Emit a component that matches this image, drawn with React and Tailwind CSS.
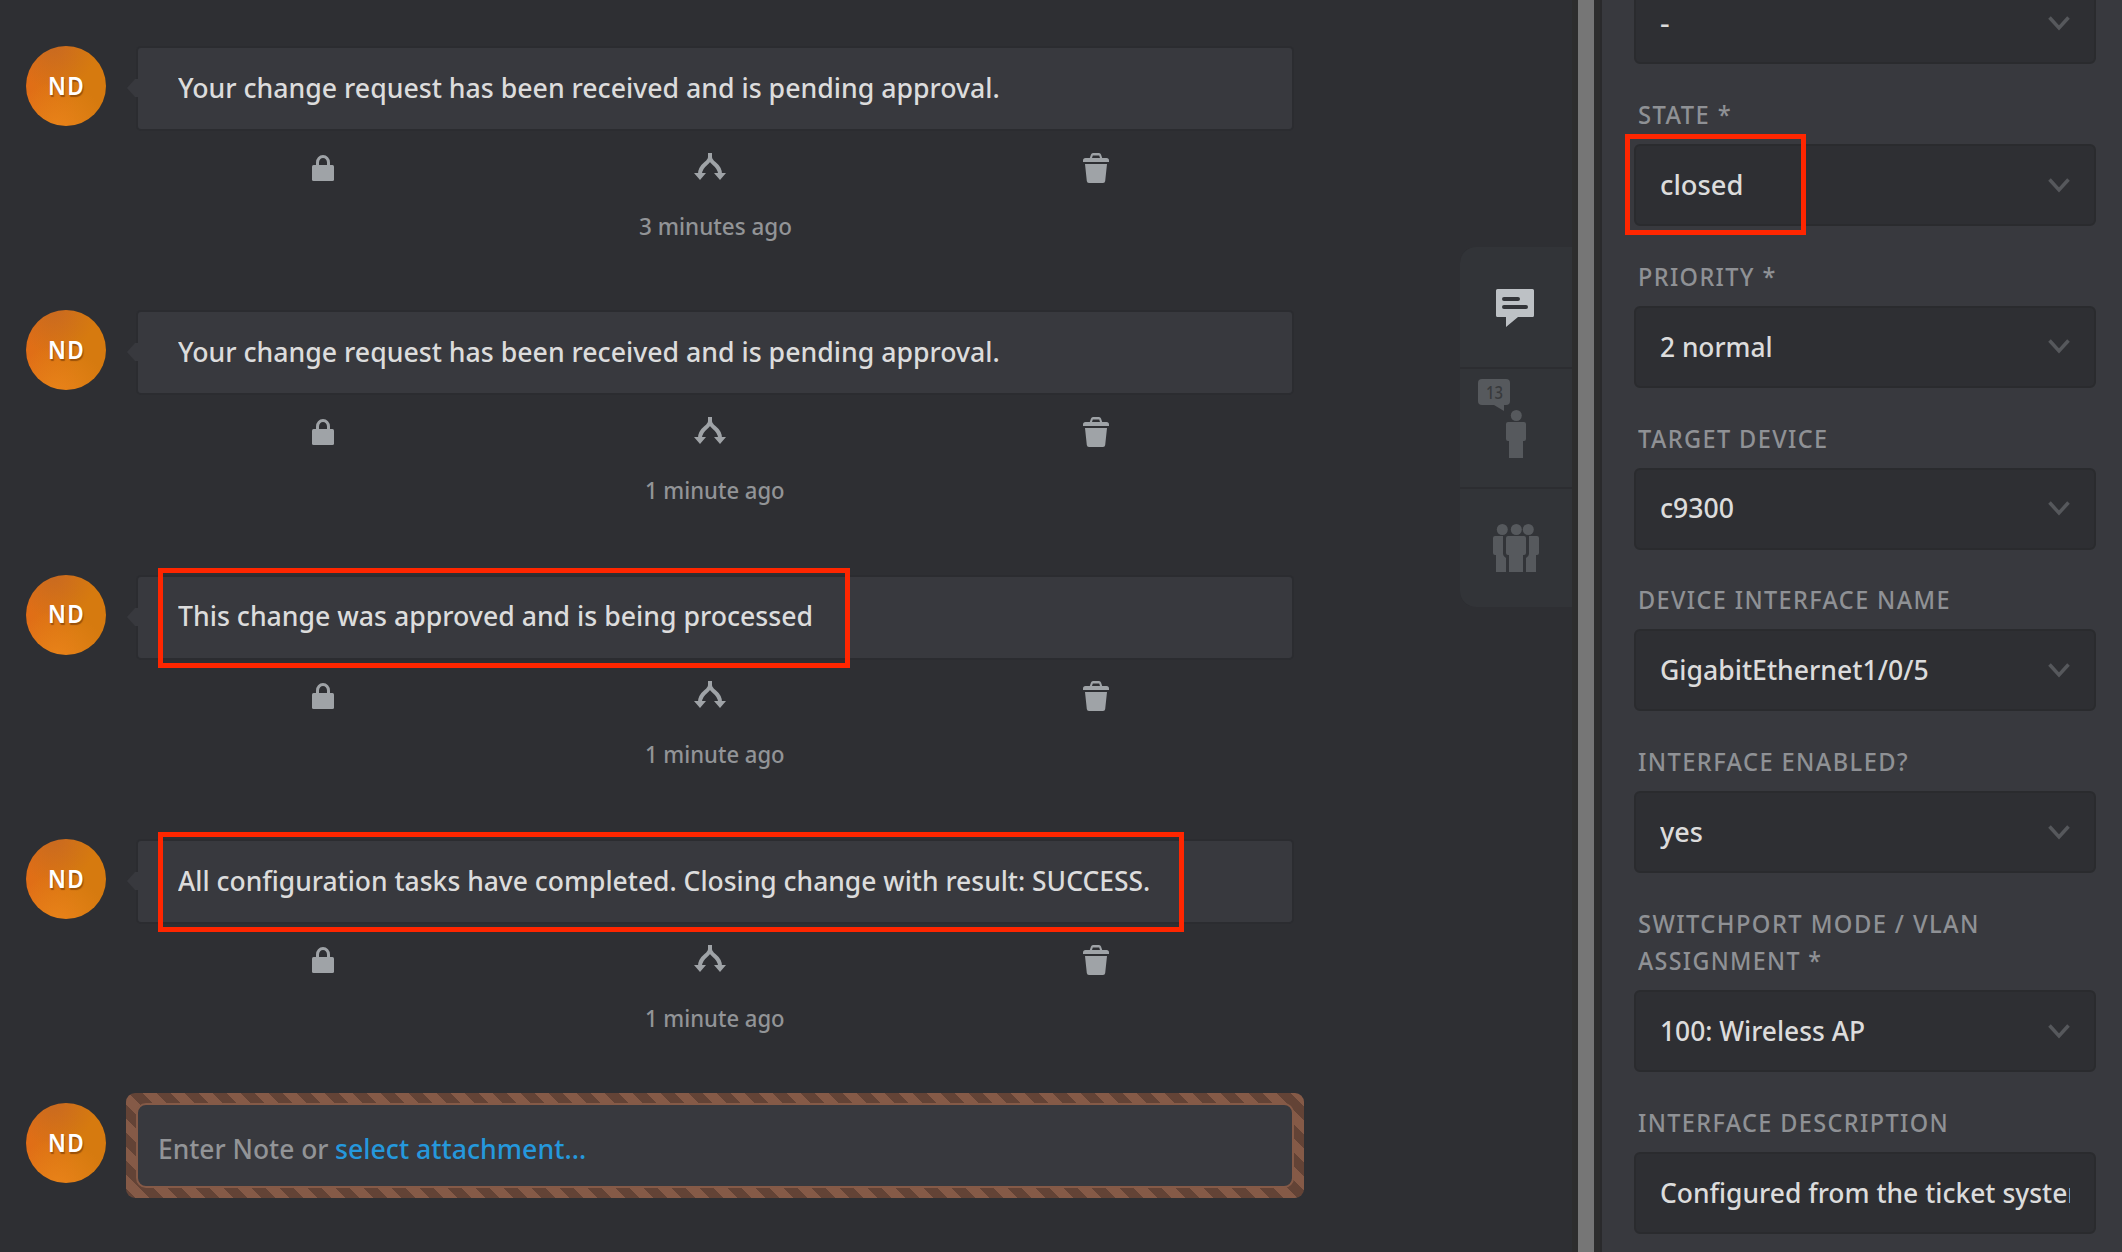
import React, { useLayoutEffect, useRef, useState } from "react";

/* Single-line text squeezed or stretched horizontally to an exact width. */
function FitText({ width, className = "", children }) {
  const ref = useRef(null);
  const [scale, setScale] = useState(1);
  useLayoutEffect(() => {
    if (ref.current) setScale(width / ref.current.offsetWidth);
  }, [width]);
  return (
    <span className="inline-block whitespace-nowrap" style={{ width }}>
      <span
        ref={ref}
        className={`inline-block origin-left whitespace-nowrap ${className}`}
        style={{ transform: `scaleX(${scale})` }}
      >
        {children}
      </span>
    </span>
  );
}

function Avatar() {
  return (
    <div className="flex size-20 shrink-0 items-center justify-center rounded-full bg-[radial-gradient(circle_at_35%_0%,#c96a20_0%,transparent_45%),radial-gradient(circle_at_40%_105%,#e98319_0%,transparent_50%),linear-gradient(90deg,#e16d17,#d67a0f_65%)] pb-px text-white [text-shadow:1px_2px_1px_rgba(90,40,0,0.5)]">
      <FitText width={37} className="text-[25px] font-semibold tracking-[1.5px]">ND</FitText>
    </div>
  );
}

function LockIcon() {
  return (
    <svg width="22" height="26" viewBox="0 0 22 26" fill="#9fa3a7">
      <rect x="0" y="10" width="22" height="16" rx="1.5" />
      <path d="M5.500 11V7.500a5.500 6 0 0 1 11 0V11" fill="none" stroke="#9fa3a7" strokeWidth="3" />
    </svg>
  );
}

function ForkIcon() {
  return (
    <svg width="32" height="27" viewBox="0 0 32 27" fill="#9fa3a7">
      <path d="M0 20h12l-6 7zM20 20h12l-6 7z" />
      <path d="M16 0v4C16 11 6 10.500 6 21M16 4C16 11 26 10.500 26 21" fill="none" stroke="#9fa3a7" strokeWidth="4" />
    </svg>
  );
}

function TrashIcon() {
  return (
    <svg width="26" height="30" viewBox="0 0 26 30" fill="#9fa3a7">
      <path d="M0 9V7.500Q0 5 2.500 5H6.800L8 1.500Q8.500 0 10 0h6q1.500 0 2 1.500L19.200 5h4.300Q26 5 26 7.500V9zM9 5h8l-.8-2.500H9.800z" fillRule="evenodd" />
      <path d="M2 11h22l-1.800 17q-.2 2-2.200 2H6q-2 0-2.200-2z" />
    </svg>
  );
}

const RED_BOX = "pointer-events-none absolute border-[5px] border-[#ff2600]";

function Note({ text, width, ago, agoWidth, mark }) {
  return (
    <article className="flex h-[264.25px] items-start pl-[26px]">
      <Avatar />
      <div className="relative mt-[2px] ml-8 w-[1154px] shrink-0">
        <svg className="absolute top-[31px] -left-[11px]" width="11" height="18" viewBox="0 0 11 18">
          <path d="M11 0H8L0 9l8 9h3z" fill="#38393e" />
        </svg>
        <div className="flex h-[81px] items-center rounded-[3px] bg-[#38393e] pb-px pl-[40px] text-[27px] font-medium text-[#dcdcdc] shadow-[0_0_0_2px_#2b2c30]">
          <FitText width={width} className="leading-9">{text}</FitText>
        </div>
        {mark && <div className={`${RED_BOX} ${mark}`} />}
        <div className="-ml-2 grid h-[53.5px] grid-cols-[386.5px_386.5px_386.5px] items-end justify-items-center">
          <div className="pb-[2px]"><LockIcon /></div>
          <div className="pb-[3px]"><ForkIcon /></div>
          <TrashIcon />
        </div>
        <div className="mt-[27px] flex justify-center text-[23.500px] leading-8 font-medium text-[#929497]">
          <FitText width={agoWidth}>{ago}</FitText>
        </div>
      </div>
    </article>
  );
}

const NOTES = [
  { text: "Your change request has been received and is pending approval.", width: 822, ago: "3 minutes ago", agoWidth: 153 },
  { text: "Your change request has been received and is pending approval.", width: 822, ago: "1 minute ago", agoWidth: 140 },
  {
    text: "This change was approved and is being processed",
    width: 635,
    ago: "1 minute ago",
    agoWidth: 140,
    mark: "left-[19.5px] -top-[9px] h-[100px] w-[692px]",
  },
  {
    text: "All configuration tasks have completed. Closing change with result: SUCCESS.",
    width: 972,
    ago: "1 minute ago",
    agoWidth: 140,
    mark: "left-[19.5px] -top-[9px] h-[100px] w-[1026px]",
  },
];

function NoteEditor() {
  return (
    <div className="flex items-start pl-[26px]">
      <Avatar />
      <div className="-mt-[10px] ml-5 h-[105px] w-[1178px] shrink-0 rounded-[9px] bg-[linear-gradient(45deg,#634336_25%,#855a47_25%,#855a47_50%,#634336_50%,#634336_75%,#855a47_75%)] bg-[length:28px_28px] bg-[position:3px_0px] p-[10px]">
        <div className="flex h-[85px] items-center rounded-[10px] border-2 border-[#855a47] bg-[#38393e] pt-[8px] pl-[20px] text-[27px] font-medium text-[#929497]">
          <FitText width={170}>Enter Note or</FitText>
          <span className="ml-[7px] text-[#2598dc]">
            <FitText width={251}>select attachment...</FitText>
          </span>
        </div>
      </div>
    </div>
  );
}

function ChatIcon() {
  return (
    <svg width="38" height="38" viewBox="0 0 38 38">
      <path d="M1.500 0h35Q38 0 38 1.500v25q0 1.500-1.500 1.500H22L10 38V28H1.500Q0 28 0 26.500v-25Q0 0 1.500 0z" fill="#bdc1c5" />
      <path d="M8 10h8M8 10h14M8 18h22" stroke="#323438" strokeWidth="4" strokeLinecap="round" />
    </svg>
  );
}

function PersonIcon() {
  return (
    <svg width="20" height="48" viewBox="0 0 20 48" fill="#56595d">
      <circle cx="10.300" cy="5.500" r="5.500" />
      <path d="M2 12h16q2 0 2 2v15q0 2-2 2h-1v17H3V31H2q-2 0-2-2V14q0-2 2-2z" />
    </svg>
  );
}

function GroupIcon() {
  return (
    <svg width="46" height="48" viewBox="0 0 46 48" fill="#56595d">
      <circle cx="9.300" cy="5.500" r="5.500" />
      <circle cx="23.300" cy="5.500" r="5.500" />
      <circle cx="35.300" cy="5.500" r="5.500" />
      <path d="M15 12h16q2 0 2 2v15q0 2-2 2h-1v17H16V31h-1q-2 0-2-2V14q0-2 2-2z" />
      <path d="M2 12h8v18q0 2 3 4v14H3V31H2q-2 0-2-2V14q0-2 2-2z" />
      <path d="M36 12h8q2 0 2 2v15q0 2-2 2h-1v17H33V34q3-2 3-4z" />
    </svg>
  );
}

function TabRail() {
  return (
    <nav className="mt-[247px] ml-auto flex h-[360px] w-28 flex-col gap-[2px] overflow-hidden rounded-l-2xl bg-[#2c2d31]">
      <div className="h-[120px] bg-[#323438] pt-[42px] pl-9"><ChatIcon /></div>
      <div className="relative h-[118px] bg-[#323438] pt-[41px] pl-[46px]">
        <PersonIcon />
        <div className="absolute top-[10px] left-[18px] flex h-[26px] w-8 items-center justify-center rounded bg-[#56595d] text-[17.500px] font-medium text-[#38393c]">
          <FitText width={17}>13</FitText>
          <svg className="absolute top-[26px] left-4" width="10" height="6" viewBox="0 0 10 6">
            <path d="M0 0h10v6z" fill="#56595d" />
          </svg>
        </div>
      </div>
      <div className="h-[118px] bg-[#323438] pt-[35px] pl-[33px]"><GroupIcon /></div>
    </nav>
  );
}

function Field({ label = [], value, width, input, mark }) {
  return (
    <div className="flex flex-col">
      <div className="flex flex-col pt-[31.800px] pb-[11px] pl-[4px]">
        {label.map(([line, w]) => (
          <div key={line} className="flex h-[37px] items-center text-[25.500px] leading-[37px] font-medium text-[#8f9195]">
            <FitText width={w} className="tracking-[1.5px]">{line}</FitText>
          </div>
        ))}
      </div>
      <div className="relative flex h-[82px] items-center justify-between rounded-md border-2 border-[#2a2b2e] bg-[#2e2f33] pr-6 pl-6 text-[27px] font-medium text-[#dcdcdc]">
        <div className="min-w-0 flex-1 overflow-hidden">
          <FitText width={width}>{value}</FitText>
        </div>
        {!input && (
          <svg className="shrink-0" width="22" height="15" viewBox="0 0 22 15">
            <path d="M1.500 1.500 11 12l9.500-10.500" fill="none" stroke="#56585c" strokeWidth="3.500" />
          </svg>
        )}
        {mark && <div className={`${RED_BOX} ${mark}`} />}
      </div>
    </div>
  );
}

const FIELDS = [
  { label: [["STATE *", 94]], value: "closed", width: 83, mark: "-top-3 -left-[11px] h-[101px] w-[181px]" },
  { label: [["PRIORITY *", 139]], value: "2 normal", width: 113 },
  { label: [["TARGET DEVICE", 191]], value: "c9300", width: 74 },
  { label: [["DEVICE INTERFACE NAME", 313]], value: "GigabitEthernet1/0/5", width: 269 },
  { label: [["INTERFACE ENABLED?", 271]], value: "yes", width: 43 },
  { label: [["SWITCHPORT MODE / VLAN", 342], ["ASSIGNMENT *", 184]], value: "100: Wireless AP", width: 205 },
  { label: [["INTERFACE DESCRIPTION", 311]], value: "Configured from the ticket system", width: 432, input: true },
];

export default function App() {
  return (
    <div className="flex h-[1252px] w-[2122px] overflow-hidden bg-[#2e2f33] font-['Noto_Sans',sans-serif]">
      <main className="flex w-[1572px] shrink-0">
        <section className="w-[1304px] shrink-0 pt-[46px]">
          {NOTES.map((note, i) => (
            <Note key={i} {...note} />
          ))}
          <NoteEditor />
        </section>
        <TabRail />
      </main>
      <div className="w-[30px] shrink-0 border-r-2 border-l-6 border-r-[#2a2a2c] border-l-[#2d2d2d] bg-[#2e2e2e]">
        <div className="h-full w-4 bg-[#767676]" />
      </div>
      <aside className="flex w-[520px] shrink-0 flex-col bg-[#38393e] pr-[26px] pl-8">
        <div className="-mt-[60.500px] flex flex-col">
          <Field value="-" width={10} />
          {FIELDS.map((field) => (
            <Field key={field.label[0][0]} {...field} />
          ))}
        </div>
      </aside>
    </div>
  );
}
